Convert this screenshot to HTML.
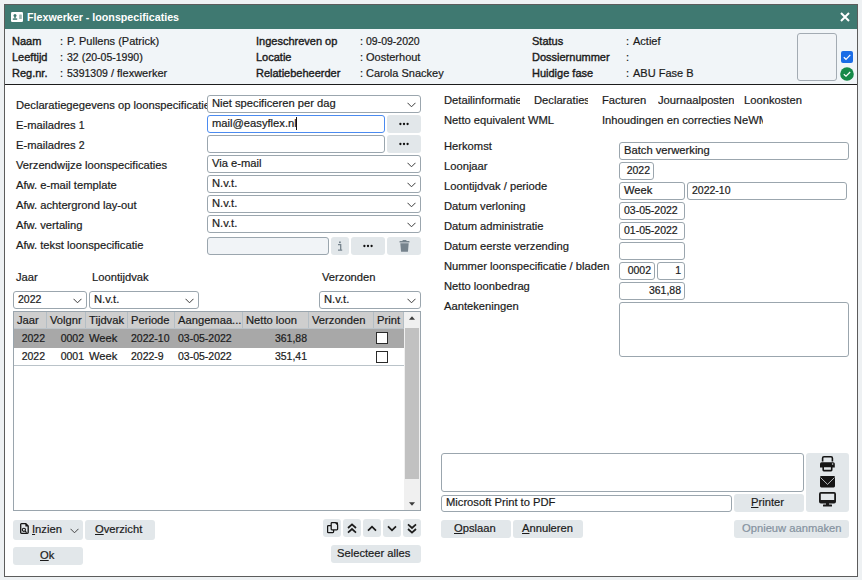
<!DOCTYPE html>
<html><head><meta charset="utf-8">
<style>
*{box-sizing:border-box;margin:0;padding:0}
html,body{width:862px;height:580px;overflow:hidden;background:#eef1f3;font-family:"Liberation Sans",sans-serif;color:#1b1b1b}
.a{position:absolute}
.t{position:absolute;white-space:nowrap;font-size:11.2px;line-height:14px;height:14px;-webkit-text-stroke:0.2px currentColor}
.fld{position:absolute;border:1px solid #9ba6ae;border-radius:3px;background:#fff}
.btn{position:absolute;background:#e2e7ea;border-radius:3px}
.u{text-decoration:underline;text-underline-offset:1px;text-decoration-thickness:1px}
.clip{overflow:hidden}
.d{font-size:10.5px}
</style></head><body>

<div class="a" style="left:4px;top:4px;width:854px;height:573px;border:1px solid #5c5c5c;background:#fff"></div>
<div class="a" style="left:5px;top:5px;width:852px;height:24px;background:#3f7971"></div>
<svg class="a" style="left:11px;top:12px" width="12" height="10" viewBox="0 0 12 10">
<rect x="0" y="0" width="12" height="10" rx="1.2" fill="#fff"/>
<circle cx="4" cy="3.5" r="1.5" fill="#3f7971"/>
<rect x="3.3" y="4.5" width="1.4" height="2" fill="#3f7971"/>
<rect x="1.8" y="6.4" width="4.4" height="1.4" fill="#3f7971"/>
<rect x="8.2" y="2.6" width="2.6" height="4.4" rx="0.5" fill="#9bb6b1"/>
</svg>
<div class="t" style="left:27px;top:10px;font-size:10.7px;color:#fff;font-weight:bold;-webkit-text-stroke:0;">Flexwerker - loonspecificaties</div>
<svg class="a" style="left:840px;top:12px" width="10" height="10" viewBox="0 0 10 10"><path d="M1 1L9 9M9 1L1 9" stroke="#fff" stroke-width="2"/></svg>
<div class="a" style="left:5px;top:29px;width:852px;height:55px;background:#f1f5f8"></div>
<div class="a" style="left:5px;top:84px;width:852px;height:1px;background:#1c1c1c"></div>
<div class="t" style="left:12px;top:34px;font-size:11px;-webkit-text-stroke:0.38px #1b1b1b;">Naam</div>
<div class="t" style="left:60px;top:34px;font-size:11px;">:</div>
<div class="t" style="left:67px;top:34px;font-size:11px;">P. Pullens (Patrick)</div>
<div class="t" style="left:12px;top:50px;font-size:11px;-webkit-text-stroke:0.38px #1b1b1b;">Leeftijd</div>
<div class="t" style="left:60px;top:50px;font-size:11px;">:</div>
<div class="t" style="left:67px;top:50px;font-size:11px;"><span class="d">32</span> (<span class="d">20-05-1990</span>)</div>
<div class="t" style="left:12px;top:66px;font-size:11px;-webkit-text-stroke:0.38px #1b1b1b;">Reg.nr.</div>
<div class="t" style="left:60px;top:66px;font-size:11px;">:</div>
<div class="t" style="left:67px;top:66px;font-size:11px;"><span class="d">5391309</span> / flexwerker</div>
<div class="t" style="left:256px;top:34px;font-size:11px;-webkit-text-stroke:0.38px #1b1b1b;">Ingeschreven op</div>
<div class="t" style="left:360px;top:34px;font-size:11px;">:</div>
<div class="t" style="left:366px;top:34px;font-size:11px;"><span class="d">09-09-2020</span></div>
<div class="t" style="left:256px;top:50px;font-size:11px;-webkit-text-stroke:0.38px #1b1b1b;">Locatie</div>
<div class="t" style="left:360px;top:50px;font-size:11px;">:</div>
<div class="t" style="left:366px;top:50px;font-size:11px;">Oosterhout</div>
<div class="t" style="left:256px;top:66px;font-size:11px;-webkit-text-stroke:0.38px #1b1b1b;">Relatiebeheerder</div>
<div class="t" style="left:360px;top:66px;font-size:11px;">:</div>
<div class="t" style="left:366px;top:66px;font-size:11px;">Carola Snackey</div>
<div class="t" style="left:532px;top:34px;font-size:11px;-webkit-text-stroke:0.38px #1b1b1b;">Status</div>
<div class="t" style="left:626px;top:34px;font-size:11px;">:</div>
<div class="t" style="left:633px;top:34px;font-size:11px;">Actief</div>
<div class="t" style="left:532px;top:50px;font-size:11px;-webkit-text-stroke:0.38px #1b1b1b;">Dossiernummer</div>
<div class="t" style="left:626px;top:50px;font-size:11px;">:</div>
<div class="t" style="left:532px;top:66px;font-size:11px;-webkit-text-stroke:0.38px #1b1b1b;">Huidige fase</div>
<div class="t" style="left:626px;top:66px;font-size:11px;">:</div>
<div class="t" style="left:633px;top:66px;font-size:11px;">ABU Fase B</div>
<div class="a" style="left:797px;top:33px;width:40px;height:48px;border:1px solid #a3abb3;border-radius:3px;background:#f1f4f7"></div>
<svg class="a" style="left:841px;top:51px" width="12" height="12" viewBox="0 0 12 12"><rect x="0" y="0" width="12" height="12" rx="2" fill="#1b6de6"/><path d="M2.8 6.2L5 8.3L9.3 3.8" fill="none" stroke="#fff" stroke-width="1.2"/></svg>
<svg class="a" style="left:840px;top:67px" width="14" height="14" viewBox="0 0 14 14"><circle cx="7" cy="7" r="6.8" fill="#168a48"/><path d="M3.8 7.2L6 9.2L10.2 5" fill="none" stroke="#fff" stroke-width="1.2"/></svg>
<div class="t clip" style="left:16px;top:98px;width:191px">Declaratiegegevens op loonspecificatie</div>
<div class="t" style="left:16px;top:118px;">E-mailadres <span class="d">1</span></div>
<div class="t" style="left:16px;top:138px;">E-mailadres <span class="d">2</span></div>
<div class="t" style="left:16px;top:158px;">Verzendwijze loonspecificaties</div>
<div class="t" style="left:16px;top:178px;">Afw. e-mail template</div>
<div class="t" style="left:16px;top:198px;">Afw. achtergrond lay-out</div>
<div class="t" style="left:16px;top:218px;">Afw. vertaling</div>
<div class="t" style="left:16px;top:238px;">Afw. tekst loonspecificatie</div>
<div class="fld" style="left:207px;top:95px;width:214px;height:18px;"></div>
<div class="t" style="left:212px;top:96px;">Niet specificeren per dag</div>
<svg class="a" style="left:407px;top:102px" width="9" height="6" viewBox="0 0 9 6"><path d="M0.5 0.8L4.5 4.8L8.5 0.8" fill="none" stroke="#3a3a3a" stroke-width="1"/></svg>
<div class="fld" style="left:207px;top:115px;width:178px;height:18px;border:1.5px solid #4b8bf0"></div>
<div class="t" style="left:212px;top:116px;">mail@easyflex.nl</div>
<div class="a" style="left:296px;top:117px;width:1px;height:13px;background:#111"></div>
<div class="btn" style="left:387px;top:115px;width:34px;height:18px;"></div>
<svg class="a" style="left:399px;top:122px" width="10" height="4" viewBox="0 0 10 4"><circle cx="1.4" cy="2" r="1.15" fill="#111"/><circle cx="5" cy="2" r="1.15" fill="#111"/><circle cx="8.6" cy="2" r="1.15" fill="#111"/></svg>
<div class="fld" style="left:207px;top:135px;width:178px;height:18px;"></div>
<div class="btn" style="left:387px;top:135px;width:34px;height:18px;"></div>
<svg class="a" style="left:399px;top:142px" width="10" height="4" viewBox="0 0 10 4"><circle cx="1.4" cy="2" r="1.15" fill="#111"/><circle cx="5" cy="2" r="1.15" fill="#111"/><circle cx="8.6" cy="2" r="1.15" fill="#111"/></svg>
<div class="fld" style="left:207px;top:155px;width:214px;height:18px;"></div>
<div class="t" style="left:212px;top:156px;">Via e-mail</div>
<svg class="a" style="left:407px;top:162px" width="9" height="6" viewBox="0 0 9 6"><path d="M0.5 0.8L4.5 4.8L8.5 0.8" fill="none" stroke="#3a3a3a" stroke-width="1"/></svg>
<div class="fld" style="left:207px;top:175px;width:214px;height:18px;"></div>
<div class="t" style="left:212px;top:176px;">N.v.t.</div>
<svg class="a" style="left:407px;top:182px" width="9" height="6" viewBox="0 0 9 6"><path d="M0.5 0.8L4.5 4.8L8.5 0.8" fill="none" stroke="#3a3a3a" stroke-width="1"/></svg>
<div class="fld" style="left:207px;top:195px;width:214px;height:18px;"></div>
<div class="t" style="left:212px;top:196px;">N.v.t.</div>
<svg class="a" style="left:407px;top:202px" width="9" height="6" viewBox="0 0 9 6"><path d="M0.5 0.8L4.5 4.8L8.5 0.8" fill="none" stroke="#3a3a3a" stroke-width="1"/></svg>
<div class="fld" style="left:207px;top:215px;width:214px;height:18px;"></div>
<div class="t" style="left:212px;top:216px;">N.v.t.</div>
<svg class="a" style="left:407px;top:222px" width="9" height="6" viewBox="0 0 9 6"><path d="M0.5 0.8L4.5 4.8L8.5 0.8" fill="none" stroke="#3a3a3a" stroke-width="1"/></svg>
<div class="fld" style="left:207px;top:237px;width:122px;height:18px;background:#f1f4f7"></div>
<div class="btn" style="left:331px;top:237px;width:18px;height:18px;"></div>
<svg class="a" style="left:337px;top:241px" width="6" height="10" viewBox="0 0 6 10"><rect x="2" y="0.5" width="1.8" height="1.6" fill="#76838d"/><path d="M1 3.6H3.7V8.8M1 9.2H5.2" fill="none" stroke="#76838d" stroke-width="1.3"/></svg>
<div class="btn" style="left:351px;top:237px;width:34px;height:18px;"></div>
<svg class="a" style="left:363px;top:244px" width="10" height="4" viewBox="0 0 10 4"><circle cx="1.4" cy="2" r="1.15" fill="#111"/><circle cx="5" cy="2" r="1.15" fill="#111"/><circle cx="8.6" cy="2" r="1.15" fill="#111"/></svg>
<div class="btn" style="left:387px;top:237px;width:34px;height:18px;"></div>
<svg class="a" style="left:399px;top:240px" width="11" height="12" viewBox="0 0 11 12"><rect x="0.5" y="1" width="10" height="1.6" rx="0.4" fill="#76838d"/><rect x="3.5" y="0" width="4" height="1.5" rx="0.4" fill="#76838d"/><path d="M1.3 3.2H9.7L9 11.2Q9 11.8 8.4 11.8H2.6Q2 11.8 2 11.2Z" fill="#76838d"/></svg>
<div class="t" style="left:16px;top:270px;">Jaar</div>
<div class="t" style="left:92px;top:270px;">Loontijdvak</div>
<div class="t" style="left:322px;top:270px;">Verzonden</div>
<div class="fld" style="left:13px;top:291px;width:74px;height:18px;"></div>
<div class="t" style="left:18px;top:292px;"><span class="d">2022</span></div>
<svg class="a" style="left:73px;top:298px" width="9" height="6" viewBox="0 0 9 6"><path d="M0.5 0.8L4.5 4.8L8.5 0.8" fill="none" stroke="#3a3a3a" stroke-width="1"/></svg>
<div class="fld" style="left:89px;top:291px;width:110px;height:18px;"></div>
<div class="t" style="left:94px;top:292px;">N.v.t.</div>
<svg class="a" style="left:185px;top:298px" width="9" height="6" viewBox="0 0 9 6"><path d="M0.5 0.8L4.5 4.8L8.5 0.8" fill="none" stroke="#3a3a3a" stroke-width="1"/></svg>
<div class="fld" style="left:319px;top:291px;width:102px;height:18px;"></div>
<div class="t" style="left:324px;top:292px;">N.v.t.</div>
<svg class="a" style="left:407px;top:298px" width="9" height="6" viewBox="0 0 9 6"><path d="M0.5 0.8L4.5 4.8L8.5 0.8" fill="none" stroke="#3a3a3a" stroke-width="1"/></svg>
<div class="a" style="left:13px;top:311px;width:408px;height:200px;border:1px solid #9aa5ad;background:#fff"></div>
<div class="a" style="left:14px;top:312px;width:390px;height:17px;background:#cecece"></div>
<div class="a" style="left:46px;top:312px;width:1px;height:17px;background:#b4bec5"></div>
<div class="a" style="left:85px;top:312px;width:1px;height:17px;background:#b4bec5"></div>
<div class="a" style="left:127px;top:312px;width:1px;height:17px;background:#b4bec5"></div>
<div class="a" style="left:174px;top:312px;width:1px;height:17px;background:#b4bec5"></div>
<div class="a" style="left:242px;top:312px;width:1px;height:17px;background:#b4bec5"></div>
<div class="a" style="left:308px;top:312px;width:1px;height:17px;background:#b4bec5"></div>
<div class="a" style="left:373px;top:312px;width:1px;height:17px;background:#b4bec5"></div>
<div class="a" style="left:403px;top:312px;width:1px;height:17px;background:#b4bec5"></div>
<div class="a" style="left:14px;top:328px;width:390px;height:1px;background:#bcc4ca"></div>
<div class="a" style="left:14px;top:329px;width:390px;height:19px;background:#a8a8a8"></div>
<div class="a" style="left:14px;top:365px;width:390px;height:1px;background:#bac3c9"></div>
<div class="t" style="left:17px;top:313px;">Jaar</div>
<div class="t" style="left:50px;top:313px;">Volgnr</div>
<div class="t" style="left:89px;top:313px;">Tijdvak</div>
<div class="t" style="left:131px;top:313px;">Periode</div>
<div class="t" style="left:178px;top:313px;">Aangemaa...</div>
<div class="t" style="left:246px;top:313px;">Netto loon</div>
<div class="t" style="left:312px;top:313px;">Verzonden</div>
<div class="t" style="left:377px;top:313px;">Print</div>
<div class="t" style="right:817px;top:331px;"><span class="d">2022</span></div>
<div class="t" style="right:778px;top:331px;"><span class="d">0002</span></div>
<div class="t" style="left:89px;top:331px;">Week</div>
<div class="t" style="left:131px;top:331px;"><span class="d">2022-10</span></div>
<div class="t" style="left:178px;top:331px;"><span class="d">03-05-2022</span></div>
<div class="t" style="right:555px;top:331px;"><span class="d">361,88</span></div>
<div class="t" style="right:817px;top:349px;"><span class="d">2022</span></div>
<div class="t" style="right:778px;top:349px;"><span class="d">0001</span></div>
<div class="t" style="left:89px;top:349px;">Week</div>
<div class="t" style="left:131px;top:349px;"><span class="d">2022-9</span></div>
<div class="t" style="left:178px;top:349px;"><span class="d">03-05-2022</span></div>
<div class="t" style="right:555px;top:349px;"><span class="d">351,41</span></div>
<div class="a" style="left:376px;top:332px;width:12px;height:12px;border:1px solid #2a2a2a;background:#fff"></div>
<div class="a" style="left:376px;top:351px;width:12px;height:12px;border:1px solid #2a2a2a;background:#fff"></div>
<div class="a" style="left:404px;top:312px;width:16px;height:198px;background:#f0f0f0"></div>
<div class="a" style="left:405px;top:328px;width:14px;height:151px;background:#c1c1c1"></div>
<svg class="a" style="left:409px;top:316px" width="6" height="4" viewBox="0 0 6 4"><path d="M0 3.8L3 0.3L6 3.8Z" fill="#3c3c3c"/></svg>
<svg class="a" style="left:409px;top:502px" width="6" height="4" viewBox="0 0 6 4"><path d="M0 0.2L3 3.7L6 0.2Z" fill="#3c3c3c"/></svg>
<div class="btn" style="left:13px;top:520px;width:70px;height:20px;"></div>
<svg class="a" style="left:20px;top:523px" width="9" height="11" viewBox="0 0 9 11"><path d="M0.7 1.5Q0.7 0.7 1.5 0.7H5.8L8.2 3.1V9.5Q8.2 10.3 7.4 10.3H1.5Q0.7 10.3 0.7 9.5Z" fill="none" stroke="#151515" stroke-width="1.3"/><path d="M5.4 0.6V3.5H8.3Z" fill="#151515"/><circle cx="3.9" cy="6.8" r="1.6" fill="none" stroke="#151515" stroke-width="1.1"/><path d="M5 8L6.6 9.6" stroke="#151515" stroke-width="1.1"/></svg>
<div class="t" style="left:32px;top:522px;"><span class="u">I</span>nzien</div>
<svg class="a" style="left:70px;top:528px" width="9" height="6" viewBox="0 0 9 6"><path d="M0.5 0.8L4.5 4.8L8.5 0.8" fill="none" stroke="#444" stroke-width="1"/></svg>
<div class="btn" style="left:85px;top:520px;width:70px;height:20px;"></div>
<div class="t" style="left:95px;top:522px;"><span class="u">O</span>verzicht</div>
<div class="btn" style="left:13px;top:547px;width:70px;height:18px;"></div>
<div class="t" style="left:40px;top:548px;"><span class="u">O</span>k</div>
<div class="btn" style="left:323px;top:519px;width:18px;height:18px;"></div>
<div class="btn" style="left:343px;top:519px;width:18px;height:18px;"></div>
<div class="btn" style="left:363px;top:519px;width:18px;height:18px;"></div>
<div class="btn" style="left:383px;top:519px;width:18px;height:18px;"></div>
<div class="btn" style="left:403px;top:519px;width:18px;height:18px;"></div>
<svg class="a" style="left:327px;top:522px" width="12" height="12" viewBox="0 0 12 12"><path d="M0.6 4.4Q0.6 3.6 1.4 3.6H4.2M6.6 7.8V9.8Q6.6 10.6 5.8 10.6H1.4Q0.6 10.6 0.6 9.8V4.4" fill="none" stroke="#151515" stroke-width="1.25"/><path d="M5 0.6H8.4L10.6 2.8V7Q10.6 7.8 9.8 7.8H5Q4.2 7.8 4.2 7V1.4Q4.2 0.6 5 0.6Z" fill="#e8ecef" stroke="#151515" stroke-width="1.25"/><path d="M8 0.2H10.4Q11 0.2 11 0.8V3.2Z" fill="#151515"/></svg>
<svg class="a" style="left:347px;top:523px" width="10" height="11" viewBox="0 0 10 11"><path d="M1 5L5 1.4L9 5M1 9.6L5 6L9 9.6" fill="none" stroke="#1a1a1a" stroke-width="1.7"/></svg>
<svg class="a" style="left:367px;top:525px" width="10" height="7" viewBox="0 0 10 7"><path d="M1 5.6L5 1.6L9 5.6" fill="none" stroke="#1a1a1a" stroke-width="1.7"/></svg>
<svg class="a" style="left:387px;top:525px" width="10" height="7" viewBox="0 0 10 7"><path d="M1 1.4L5 5.4L9 1.4" fill="none" stroke="#1a1a1a" stroke-width="1.7"/></svg>
<svg class="a" style="left:407px;top:523px" width="10" height="11" viewBox="0 0 10 11"><path d="M1 1.4L5 5L9 1.4M1 6L5 9.6L9 6" fill="none" stroke="#1a1a1a" stroke-width="1.7"/></svg>
<div class="btn" style="left:331px;top:545px;width:90px;height:18px;"></div>
<div class="t" style="left:337px;top:546px;">Selecteer alles</div>
<div class="t clip" style="left:444px;top:93px;width:76px">Detailinformatie</div>
<div class="t clip" style="left:534px;top:93px;width:54px">Declaraties</div>
<div class="t" style="left:602px;top:93px;">Facturen</div>
<div class="t clip" style="left:658px;top:93px;width:76px">Journaalposten</div>
<div class="t" style="left:744px;top:93px;">Loonkosten</div>
<div class="t" style="left:444px;top:113px;">Netto equivalent WML</div>
<div class="t clip" style="left:602px;top:113px;width:161px">Inhoudingen en correcties NeWML</div>
<div class="t" style="left:444px;top:139px;">Herkomst</div>
<div class="t" style="left:444px;top:159px;">Loonjaar</div>
<div class="t" style="left:444px;top:179px;">Loontijdvak / periode</div>
<div class="t" style="left:444px;top:199px;">Datum verloning</div>
<div class="t" style="left:444px;top:219px;">Datum administratie</div>
<div class="t" style="left:444px;top:239px;">Datum eerste verzending</div>
<div class="t" style="left:444px;top:259px;">Nummer loonspecificatie / bladen</div>
<div class="t" style="left:444px;top:279px;">Netto loonbedrag</div>
<div class="t" style="left:444px;top:299px;">Aantekeningen</div>
<div class="fld" style="left:619px;top:142px;width:230px;height:18px;"></div>
<div class="t" style="left:624px;top:143px;">Batch verwerking</div>
<div class="fld" style="left:619px;top:162px;width:35px;height:18px;"></div>
<div class="t" style="right:212px;top:163px;"><span class="d">2022</span></div>
<div class="fld" style="left:619px;top:182px;width:66px;height:18px;"></div>
<div class="t" style="left:624px;top:183px;">Week</div>
<div class="fld" style="left:687px;top:182px;width:160px;height:18px;"></div>
<div class="t" style="left:692px;top:183px;"><span class="d">2022-10</span></div>
<div class="fld" style="left:619px;top:202px;width:66px;height:18px;"></div>
<div class="t" style="left:624px;top:203px;"><span class="d">03-05-2022</span></div>
<div class="fld" style="left:619px;top:222px;width:66px;height:18px;"></div>
<div class="t" style="left:624px;top:223px;"><span class="d">01-05-2022</span></div>
<div class="fld" style="left:619px;top:242px;width:66px;height:18px;"></div>
<div class="fld" style="left:619px;top:262px;width:36px;height:18px;"></div>
<div class="t" style="right:211px;top:263px;"><span class="d">0002</span></div>
<div class="fld" style="left:657px;top:262px;width:28px;height:18px;"></div>
<div class="t" style="right:181px;top:263px;"><span class="d">1</span></div>
<div class="fld" style="left:619px;top:282px;width:66px;height:18px;"></div>
<div class="t" style="right:181px;top:283px;"><span class="d">361,88</span></div>
<div class="fld" style="left:619px;top:302px;width:230px;height:55px;"></div>
<div class="fld" style="left:441px;top:453px;width:363px;height:39px;"></div>
<div class="fld" style="left:441px;top:495px;width:291px;height:17px;"></div>
<div class="t" style="left:446px;top:495px;">Microsoft Print to PDF</div>
<div class="btn" style="left:734px;top:494px;width:70px;height:18px;"></div>
<div class="t" style="left:751px;top:495px;"><span class="u">P</span>rinter</div>
<div class="btn" style="left:806px;top:453px;width:43px;height:59px;"></div>
<svg class="a" style="left:820px;top:456px" width="15" height="16" viewBox="0 0 15 16"><path d="M2.6 5.6V2.2Q2.6 0.8 4 0.8H11Q12.4 0.8 12.4 2.2V5.6" fill="none" stroke="#151515" stroke-width="1.6"/><path d="M1.6 6.2H13.2Q14.8 6.2 14.8 7.8V11.4H0V7.8Q0 6.2 1.6 6.2Z" fill="#151515"/><rect x="3.2" y="10.4" width="8.5" height="4.2" rx="0.6" fill="#e2e7ea" stroke="#151515" stroke-width="1.6"/><circle cx="12.6" cy="7.9" r="0.75" fill="#e2e7ea"/></svg>
<svg class="a" style="left:820px;top:476px" width="15" height="12" viewBox="0 0 15 12"><rect x="0" y="0" width="15" height="11.4" rx="1.3" fill="#151515"/><path d="M0.6 1.6L7.5 8.4L14.4 1.6" fill="none" stroke="#dfe4e7" stroke-width="0.8"/></svg>
<svg class="a" style="left:819px;top:492px" width="17" height="15" viewBox="0 0 17 15"><rect x="0.9" y="0.9" width="15.2" height="9.6" rx="1" fill="none" stroke="#1a1a1a" stroke-width="1.8"/><rect x="7" y="10.5" width="3" height="2.5" fill="#1a1a1a"/><rect x="4" y="12.6" width="9" height="1.8" rx="0.5" fill="#1a1a1a"/><rect x="1" y="8" width="15" height="2.5" fill="#1a1a1a"/></svg>
<div class="btn" style="left:441px;top:520px;width:70px;height:18px;"></div>
<div class="t" style="left:454px;top:521px;"><span class="u">O</span>pslaan</div>
<div class="btn" style="left:513px;top:520px;width:70px;height:18px;"></div>
<div class="t" style="left:522px;top:521px;"><span class="u">A</span>nnuleren</div>
<div class="btn" style="left:734px;top:520px;width:115px;height:18px;"></div>
<div class="t" style="left:742px;top:521px;color:#8592a0;">Opnieuw aanmaken</div>
</body></html>
